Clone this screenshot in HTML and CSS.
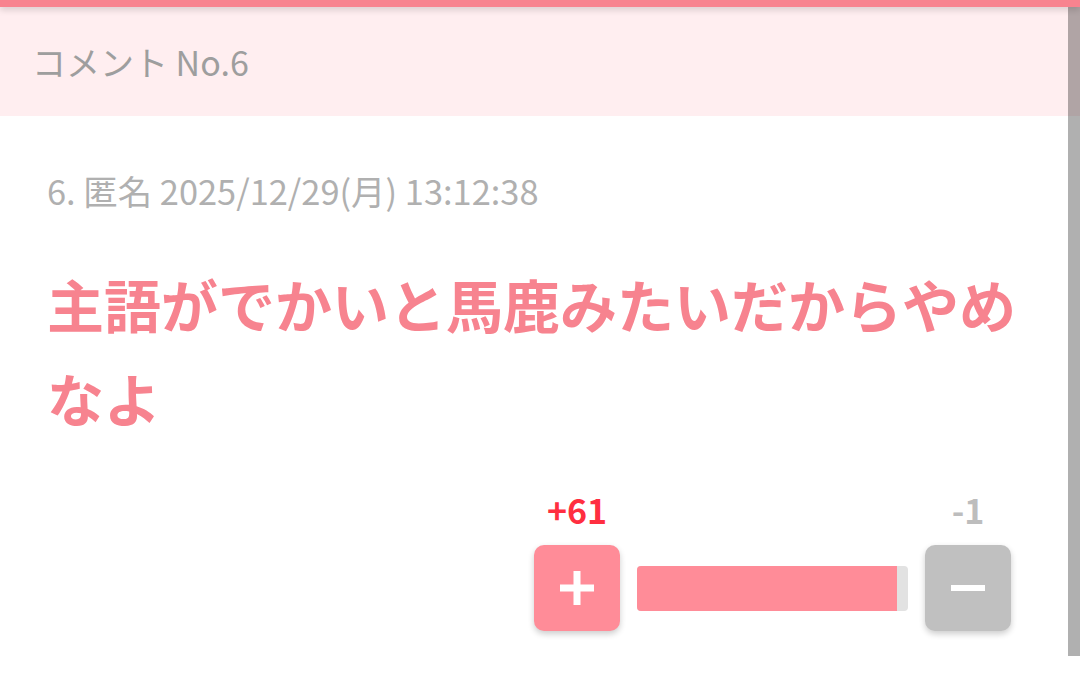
FILE: index.html
```html
<!DOCTYPE html>
<html lang="ja">
<head>
    <meta charset="UTF-8">
    <meta name="viewport" content="width=device-width, initial-scale=1.0">
    <title>コメント No.6</title>
    <link rel="stylesheet" href="styles.css">
</head>
<body>
    <div class="top-bar"></div>
    <div class="page">
        <div class="header">コメント No.6</div>

        <div class="comment">
            <div class="comment-meta">6. 匿名 2025/12/29(月) 13:12:38</div>
            <div class="comment-text">主語がでかいと馬鹿みたいだからやめなよ</div>

            <div class="vote">
                <div class="vote-count good">+61</div>
                <div></div>
                <div class="vote-count bad">-1</div>

                <button class="vote-button plus" aria-label="good">
                    <svg width="34" height="34" viewBox="0 0 34 34"><path d="M17 0v34M0 17h34" stroke="#fff" stroke-width="7"/></svg>
                </button>
                <div class="vote-bar"><div class="vote-bar-fill" style="width: 96%"></div></div>
                <button class="vote-button minus" aria-label="bad">
                    <svg width="34" height="34" viewBox="0 0 34 34"><path d="M0 17h34" stroke="#fff" stroke-width="6"/></svg>
                </button>
            </div>
        </div>

        <div class="scrollbar"></div>
    </div>
</body>
</html>
```

FILE: styles.css
```css
* { margin: 0; padding: 0; box-sizing: border-box; }
body {
    font-family: "Noto Sans CJK JP", "Noto Sans", sans-serif;
    background: #fff;
    color: #333;
    height: 688px;
    overflow: hidden;
}
.top-bar {
    height: 7px;
    background: #f8838f;
    box-shadow: 0 3px 6px rgba(0, 0, 0, 0.15);
    position: relative;
    z-index: 2;
}
.page {
    position: relative;
}
.header {
    height: 109px;
    background: #ffeef0;
    color: #9e9e9e;
    font-size: 34px;
    padding-left: 32px;
    display: flex;
    align-items: center;
}
.comment {
    padding: 52px 60px 0 47px;
}
.comment-meta {
    font-size: 34.4px;
    line-height: 44px;
    color: #b0b0b0;
}
.comment-text {
    margin-top: 44px;
    font-size: 57px;
    line-height: 94px;
    font-weight: bold;
    color: #f7838f;
}
.vote {
    margin-top: 46px;
    margin-right: 9px;
    display: grid;
    grid-template-columns: 86px 271px 86px;
    column-gap: 17px;
    row-gap: 15px;
    justify-content: end;
    align-items: center;
}
.vote-count {
    text-align: center;
    font-size: 34px;
    line-height: 40px;
    font-weight: bold;
}
.vote-count.good { color: #ff2e40; }
.vote-count.bad { color: #bdbdbd; }
.vote-button {
    width: 86px;
    height: 86px;
    border: none;
    border-radius: 10px;
    display: flex;
    align-items: center;
    justify-content: center;
    box-shadow: 0 3px 6px rgba(0, 0, 0, 0.2);
    cursor: pointer;
}
.vote-button.plus { background: #ff8c98; }
.vote-button.minus { background: #c0c0c0; }
.vote-bar {
    height: 45px;
    background: #e2e2e2;
    border-radius: 4px;
    overflow: hidden;
}
.vote-bar-fill {
    height: 100%;
    background: #ff8c98;
}
.scrollbar {
    position: absolute;
    top: 0;
    right: 0;
    width: 12px;
    height: 649px;
    background: rgba(0, 0, 0, 0.31);
}
```
